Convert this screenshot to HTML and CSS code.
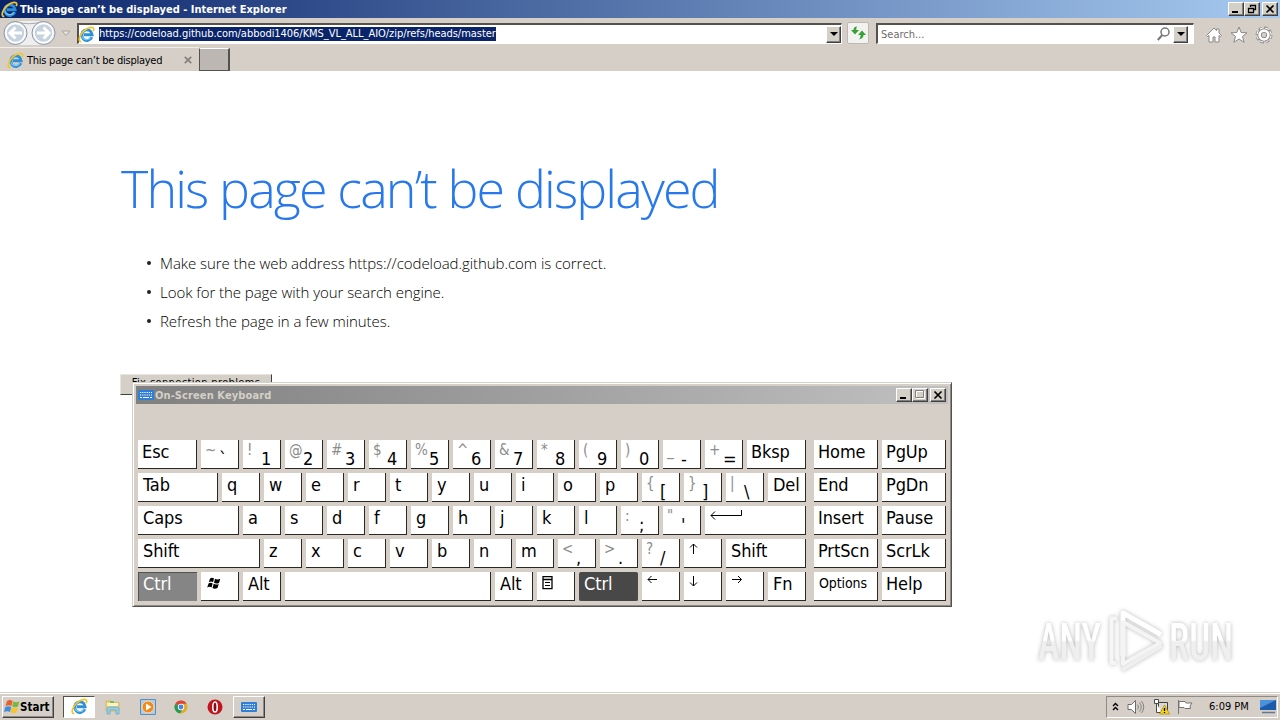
FILE: index.html
```
<!DOCTYPE html>
<html lang="en">
<head>
    <meta charset="UTF-8">
    <title>This page can't be displayed</title>
    <link rel="stylesheet" href="styles.css">
</head>
<body>
    <!-- shared icons -->
    <svg class="defs" width="0" height="0">
        <symbol id="ie" viewBox="0 0 18 18">
            <path d="M14.600 11.800 A5.600 5.600 0 1 1 15 9.300 H6" fill="none" stroke="#2d8fd8" stroke-width="3"/>
            <path d="M13.500 12 A5.300 5.300 0 0 1 4 11" fill="none" stroke="#7accf3" stroke-width="1.200"/>
            <path d="M3.500 16.600 C-1.500 16.500 2.500 6 11 2.200 C15.500 .4 17.800 2 16 5.500" fill="none" stroke="#f3c52c" stroke-width="1.800"/>
        </symbol>
        <symbol id="kbd" viewBox="0 0 16 10">
            <rect width="16" height="10" rx="1" fill="#2f7fd6"/>
            <path d="M2 2.500h12M2 5h12" stroke="#fff" stroke-width="1.200" stroke-dasharray="1.200 1"/>
            <path d="M2 7.500h2M5 7.500h6M12 7.500h2" stroke="#fff" stroke-width="1.200"/>
        </symbol>
    </svg>

    <div class="titlebar">
        <svg class="ic18"><use href="#ie"/></svg>
        <span class="title">This page can’t be displayed - Internet Explorer</span>
        <div class="winbtns">
            <span class="wb"><svg viewBox="0 0 14 12"><path d="M3 9h6" stroke="#000" stroke-width="2"/></svg></span>
            <span class="wb"><svg viewBox="0 0 14 12"><path d="M5.500 4V2.500h5v4H9M5 2.500h6M3.500 5.500h5v4h-5zM3 5.500h6" fill="none" stroke="#000" stroke-width="1.300"/></svg></span>
            <span class="wb close"><svg viewBox="0 0 14 12"><path d="M3.500 2.500l7 7M10.500 2.500l-7 7" stroke="#000" stroke-width="1.700"/></svg></span>
        </div>
    </div>

    <div class="toolbar">
        <svg class="nav" width="72" height="28" viewBox="0 0 72 28">
            <path d="M15 2H43V26H15z" fill="#f0eff0"/>
            <path d="M15 2.500 Q29 7 43 2.500" fill="none" stroke="#aaa9ae"/>
            <circle cx="15.500" cy="14" r="11.500" fill="#e6ebf0" stroke="#8c98a7"/>
            <circle cx="15.500" cy="14" r="9.500" fill="#c6d3de" stroke="#fff" stroke-width="1.500"/>
            <path d="M22 14H10M15.500 8.500L10 14l5.500 5.500" fill="none" stroke="#fff" stroke-width="3"/>
            <circle cx="43.500" cy="14" r="11.500" fill="#e6ebf0" stroke="#8c98a7"/>
            <circle cx="43.500" cy="14" r="9.500" fill="#c6d3de" stroke="#fff" stroke-width="1.500"/>
            <path d="M37 14h12M43.500 8.500L49 14l-5.500 5.500" fill="none" stroke="#fff" stroke-width="3"/>
            <path d="M62 12h8l-4 4.500z" fill="#e5e2de" stroke="#aaa59f"/>
        </svg>
        <div class="field address">
            <svg class="ic18"><use href="#ie"/></svg>
            <span class="url">https://codeload.github.com/abbodi1406/KMS_VL_ALL_AIO/zip/refs/heads/master</span>
            <span class="drop"></span>
        </div>
        <div class="go">
            <svg width="20" height="20" viewBox="0 0 20 20"><path d="M9 3.500Q5.500 3.500 5.500 7H3l4 4.500L11 7H8.300Q8 5 9 3.500zM11 16.500Q15.500 15.500 15.500 12H18l-4-4.500L10 12h2.700Q12.500 15 11 16.500z" fill="#35a137"/></svg>
        </div>
        <div class="field search">
            <span class="hint">Search...</span>
            <svg width="16" height="16" viewBox="0 0 16 16"><circle cx="9" cy="6" r="4" fill="none" stroke="#777" stroke-width="1.500"/><path d="M6.300 9l-4.500 5" stroke="#777" stroke-width="2"/></svg>
            <span class="drop"></span>
        </div>
        <div class="tools">
            <svg width="18" height="18" viewBox="0 0 18 18"><path d="M1.500 9.500L9 2l2.500 2.500V3h2.500v4l2.500 2.500-1 1-1.500-1V16h-4v-5H8v5H4V9.500l-1.500 1z" fill="#fff" stroke="#8b8885"/></svg>
            <svg width="18" height="18" viewBox="0 0 18 18"><path d="M9 1l2.200 5.500 5.800.3-4.500 3.700 1.600 5.800L9 13l-5.100 3.300 1.600-5.800L1 6.800l5.800-.3z" fill="#fff" stroke="#8b8885"/></svg>
            <svg width="18" height="18" viewBox="0 0 18 18"><circle cx="9" cy="9" r="6.800" fill="none" stroke="#8b8885" stroke-width="3.200" stroke-dasharray="3.300 2.040"/><circle cx="9" cy="9" r="6.500" fill="none" stroke="#fff" stroke-width="2.200" stroke-dasharray="2.400 2.705" stroke-dashoffset="-.4"/><circle cx="9" cy="9" r="4.400" fill="none" stroke="#8b8885" stroke-width="4.400"/><circle cx="9" cy="9" r="4.400" fill="none" stroke="#fff" stroke-width="2.600"/></svg>
        </div>
    </div>

    <div class="tabs">
        <div class="tab">
            <svg class="ic18"><use href="#ie"/></svg>
            <span class="tabname">This page can’t be displayed</span>
            <svg class="tabx" width="8" height="8" viewBox="0 0 8 8"><path d="M.8.8l6.400 6.400M7.200.8L.8 7.200" stroke="#85817c" stroke-width="1.800"/></svg>
        </div>
        <div class="newtab"></div>
    </div>

    <div class="page">
        <h1>This page can’t be displayed</h1>
        <ul>
            <li class="l1">Make sure the web address https://codeload.github.com is correct.</li>
            <li class="l2">Look for the page with your search engine.</li>
            <li class="l3">Refresh the page in a few minutes.</li>
        </ul>
        <div class="fix">Fix connection problems</div>
    </div>

    <div class="osk">
        <div class="osk-title">
            <svg class="kbd"><use href="#kbd"/></svg>
            <span class="title">On-Screen Keyboard</span>
            <div class="winbtns">
                <span class="wb"><svg viewBox="0 0 14 12"><path d="M3 9h6" stroke="#000" stroke-width="2"/></svg></span>
                <span class="wb"><svg viewBox="0 0 14 12"><path d="M3.500 2.500h8v7h-8z" fill="none" stroke="#fff"/><path d="M2.500 1.500h8v7h-8z" fill="none" stroke="#85817a"/></svg></span>
                <span class="wb close"><svg viewBox="0 0 14 12"><path d="M3.500 2.500l7 7M10.500 2.500l-7 7" stroke="#000" stroke-width="1.700"/></svg></span>
            </div>
        </div>
        <div class="keys">
            <div class="row">
                <div class="key w59">Esc</div>
                <div class="key two tilde"><i>~</i><b>`</b></div>
                <div class="key two"><i>!</i><b>1</b></div>
                <div class="key two"><i>@</i><b>2</b></div>
                <div class="key two"><i>#</i><b>3</b></div>
                <div class="key two"><i>$</i><b>4</b></div>
                <div class="key two"><i>%</i><b>5</b></div>
                <div class="key two"><i>^</i><b>6</b></div>
                <div class="key two"><i>&amp;</i><b>7</b></div>
                <div class="key two"><i>*</i><b>8</b></div>
                <div class="key two"><i>(</i><b>9</b></div>
                <div class="key two"><i>)</i><b>0</b></div>
                <div class="key two"><i>_</i><b>-</b></div>
                <div class="key two"><i>+</i><b>=</b></div>
                <div class="key w59">Bksp</div>
                <div class="key side">Home</div>
                <div class="key w64">PgUp</div>
            </div>
            <div class="row">
                <div class="key w80">Tab</div>
                <div class="key">q</div>
                <div class="key">w</div>
                <div class="key">e</div>
                <div class="key">r</div>
                <div class="key">t</div>
                <div class="key">y</div>
                <div class="key">u</div>
                <div class="key">i</div>
                <div class="key">o</div>
                <div class="key">p</div>
                <div class="key two"><i>{</i><b>[</b></div>
                <div class="key two"><i>}</i><b>]</b></div>
                <div class="key two"><i>|</i><b>\</b></div>
                <div class="key">Del</div>
                <div class="key side">End</div>
                <div class="key w64">PgDn</div>
            </div>
            <div class="row">
                <div class="key w101">Caps</div>
                <div class="key">a</div>
                <div class="key">s</div>
                <div class="key">d</div>
                <div class="key">f</div>
                <div class="key">g</div>
                <div class="key">h</div>
                <div class="key">j</div>
                <div class="key">k</div>
                <div class="key">l</div>
                <div class="key two"><i>:</i><b>;</b></div>
                <div class="key two"><i>"</i><b>'</b></div>
                <div class="key w101"><svg width="34" height="12" viewBox="0 0 34 12"><path d="M31.500 0v5.500H1M5 1.500l-4 4 4 4" fill="none" stroke="#000"/></svg></div>
                <div class="key side">Insert</div>
                <div class="key w64">Pause</div>
            </div>
            <div class="row">
                <div class="key w122">Shift</div>
                <div class="key">z</div>
                <div class="key">x</div>
                <div class="key">c</div>
                <div class="key">v</div>
                <div class="key">b</div>
                <div class="key">n</div>
                <div class="key">m</div>
                <div class="key two"><i>&lt;</i><b>,</b></div>
                <div class="key two"><i>&gt;</i><b>.</b></div>
                <div class="key two"><i>?</i><b>/</b></div>
                <div class="key"><svg class="up" width="12" height="13" viewBox="0 0 12 13"><path d="M4.500 11V1M1 4.500L4.500 1 8 4.500" fill="none" stroke="#000"/></svg></div>
                <div class="key w80">Shift</div>
                <div class="key side">PrtScn</div>
                <div class="key w64">ScrLk</div>
            </div>
            <div class="row">
                <div class="key w59 latched">Ctrl</div>
                <div class="key win"><svg width="16" height="15" viewBox="0 0 16 15"><path d="M4 2.500q2-1.500 4 0L7 6.200Q5 4.700 2.800 6.200zM9 2.800q2.500 1.500 5.300 0L13 7Q10 8.300 8 6.800zM2.500 7.500q2-1.500 4.200 0l-1.200 4Q3.500 10 1.200 11.500zM7.700 7.800q2 1.500 5 .2L11.500 12q-3 1.300-5 0z"/></svg></div>
                <div class="key">Alt</div>
                <div class="key space"></div>
                <div class="key">Alt</div>
                <div class="key"><svg width="12" height="15" viewBox="0 0 12 15"><path d="M1 .7h9v12H1zM.5 3.500h10" fill="none" stroke="#000" stroke-width="1.300"/><path d="M3 6.500h5M3 9.500h5" stroke="#000"/></svg></div>
                <div class="key w59 down">Ctrl</div>
                <div class="key"><svg width="12" height="12" viewBox="0 0 12 12"><path d="M10 3.500H1M4.500 0L1 3.500 4.500 7" fill="none" stroke="#000"/></svg></div>
                <div class="key"><svg width="12" height="13" viewBox="0 0 12 13"><path d="M4.500 0v10M1 6.500L4.500 10 8 6.500" fill="none" stroke="#000"/></svg></div>
                <div class="key"><svg width="12" height="12" viewBox="0 0 12 12"><path d="M1 3.500h9.500M7 0l3.500 3.500L7 7" fill="none" stroke="#000"/></svg></div>
                <div class="key">Fn</div>
                <div class="key side options">Options</div>
                <div class="key w64">Help</div>
            </div>
        </div>
    </div>

    <svg class="watermark" width="250" height="80" viewBox="0 0 250 80">
        <defs>
            <linearGradient id="fade" x1="0" y1="0" x2="0" y2="1">
                <stop offset=".46" stop-color="#fff"/>
                <stop offset=".49" stop-color="#efefef"/>
            </linearGradient>
        </defs>
        <text x="8" y="60" textLength="63" lengthAdjust="spacingAndGlyphs">ANY</text>
        <text x="139" y="60" textLength="64" lengthAdjust="spacingAndGlyphs">RUN</text>
        <path d="M87 18.500h-5.500V63H86" fill="none" stroke="#f6f6f6" stroke-width="4" stroke-linejoin="round"/>
        <path d="M93 56V13L131 34.500" fill="none" stroke="#fff" stroke-width="5" stroke-linejoin="round"/>
        <path d="M93 22L130 43 93 64z" fill="none" stroke="#f4f4f4" stroke-width="4" stroke-linejoin="round"/>
        <path d="M92 69.500L132 46" stroke="#efefef" stroke-width="4" fill="none"/>
    </svg>

    <div class="taskbar">
        <div class="start">
            <svg width="16" height="16" viewBox="0 0 16 16"><path d="M3 2q3-2 5.500 0L7.500 7Q5 5.500 1.500 7z" fill="#e8602a"/><path d="M9.300 2.500q3 1.500 6 0L14 7.500q-3 1.500-5.700 0z" fill="#7db83a"/><path d="M1.300 8q3-1.500 6 0L6 13Q3 11.500 0 13z" fill="#3f8fdc"/><path d="M8 8.500q3 1.500 6 0L12.500 13.500q-3 1.500-6 0z" fill="#f7c42c"/></svg>
            <span>Start</span>
        </div>
        <div class="task active"><svg class="ic18"><use href="#ie"/></svg></div>
        <div class="quick">
            <svg width="16" height="16" viewBox="0 0 16 16"><path d="M1 2h5l1 1.500h7V12H1z" fill="#f0cf69" stroke="#cfae4e" stroke-width=".6"/><path d="M2 4h11v3H2z" fill="#fbf3c4"/><path d="M5 3h4" stroke="#57b567" stroke-width="1.500"/><path d="M2 15V9.500Q2 8 4 8h8q2 0 2 1.500V15h-3v-4H5v4z" fill="#8fcdec" stroke="#5b9fc4" stroke-width=".6"/></svg>
            <svg width="16" height="16" viewBox="0 0 16 16"><path d="M.5.500h15v15H.5z" fill="#a9cdec" stroke="#5b8ebf"/><circle cx="8" cy="8" r="6" fill="#f08a1d" stroke="#fbdcae"/><path d="M6 4.500v7L11.500 8z" fill="#fff"/></svg>
            <svg width="14" height="14" viewBox="0 0 14 14"><circle cx="7" cy="7" r="6.500" fill="#e1ad25"/><path d="M7 7L1.400 3.700A6.500 6.500 0 0 1 12.700 3.800H7z" fill="#dc4437"/><path d="M7 7L1.400 3.700A6.500 6.500 0 0 0 6 13.500L8.500 9z" fill="#249a57"/><circle cx="7" cy="7" r="3.200" fill="#fff"/><circle cx="7" cy="7" r="2.400" fill="#4a83e8"/></svg>
            <svg width="16" height="16" viewBox="0 0 16 16"><circle cx="8" cy="8" r="7.500" fill="#c2141c"/><ellipse cx="8" cy="8" rx="2.200" ry="5" fill="#8b0b12" stroke="#fff" stroke-width="1.600"/></svg>
        </div>
        <div class="task osk-task"><svg class="kbd"><use href="#kbd"/></svg></div>
        <div class="tray">
            <svg width="7" height="10" viewBox="0 0 7 10"><path d="M1 4l2.500-2.500L6 4M1 8l2.500-2.500L6 8" fill="none" stroke="#000" stroke-width="1.400"/></svg>
            <svg width="18" height="16" viewBox="0 0 18 16"><path d="M1 5.500h3.500L8.500 1.500v13l-4-4H1z" fill="#fff" stroke="#6e6c69"/><path d="M10.500 5.500q2 2.500 0 5M12.500 3.500q3.500 4.500 0 9M14.500 2q4.500 6 0 12" fill="none" stroke="#85827d"/></svg>
            <svg width="17" height="17" viewBox="0 0 17 17"><path d="M5.500 4.500h9v8h-9z" fill="#d8d8d6" stroke="#3f3f3d"/><path d="M1.500 1.500h4v4h-4zM3.500 5.500V14.500H9" fill="#fff" stroke="#4a4a48"/><path d="M11.500 7l5 9h-10z" fill="#f7d51e" stroke="#a9860d" stroke-width=".7"/><path d="M11.500 10v3M11.500 14v1" stroke="#000" stroke-width="1.300"/></svg>
            <svg class="flag" width="16" height="16" viewBox="0 0 16 16"><path d="M1.500 1v14M2 2.500h6l1 1.500h6l-2 3 .5 2.500H8L7 8.500H2z" fill="#fff" stroke="#777470"/></svg>
            <span class="clock">6:09 PM</span>
            <svg width="17" height="15" viewBox="0 0 17 15"><path d="M0 1h16v10H0z" fill="#1d5cab"/><path d="M0 1h16L0 9z" fill="#4c92db"/><path d="M2 13.500h13" stroke="#5f7892" stroke-width="1.500"/></svg>
        </div>
    </div>
</body>
</html>
```
FILE: styles.css
```
* {
    box-sizing: border-box;
}

body {
    margin: 0;
    width: 1280px;
    height: 720px;
    overflow: hidden;
    position: relative;
    display: flex;
    flex-direction: column;
    background: #fff;
    color: #000;
    font-family: "DejaVu Sans Condensed", "DejaVu Sans", sans-serif;
    font-stretch: condensed;
    font-size: 11px;
    white-space: nowrap;
}

svg {
    display: block;
    flex: none;
}

.defs {
    position: absolute;
}

.ic18 {
    width: 17px;
    height: 17px;
}

.kbd {
    width: 16px;
    height: 10px;
}

/* title bars */
.titlebar {
    height: 18px;
    flex: none;
    display: flex;
    align-items: center;
    padding: 0 2px 0 1px;
    background: linear-gradient(90deg, #0a246a, #a6caf0);
    color: #fff;
}

.title {
    flex: 1;
    font-weight: bold;
    margin-left: 2px;
}

.winbtns {
    display: flex;
}

.wb {
    width: 16px;
    height: 14px;
    background: #d4d0c8;
    border: 1px solid;
    border-color: #fff #404040 #404040 #fff;
    box-shadow: inset -1px -1px #808080;
}

.wb svg {
    width: 14px;
    height: 12px;
}

.close {
    margin-left: 2px;
}

/* toolbar */
.toolbar {
    height: 29px;
    flex: none;
    display: flex;
    align-items: flex-start;
    padding-top: 5px;
    background: #d5cfc8;
}

.nav {
    margin-top: -4px;
}

.field {
    height: 21px;
    display: flex;
    align-items: center;
    background: #fff;
    border: 2px solid;
    border-width: 2px 1px 1px 2px;
    border-color: #55514d #fff #fff #55514d;
}

.address {
    width: 765px;
    margin-left: 5px;
}

.address .ic18 {
    margin-left: -1px;
}

.url {
    margin-left: 4px;
    height: 14px;
    line-height: 14px;
    background: #0a246a;
    color: #fff;
    width: 397px;
    letter-spacing: -0.04px;
}

.drop {
    width: 15px;
    height: 17px;
    margin-left: auto;
    display: flex;
    align-items: center;
    justify-content: center;
    background: #d4d0c8;
    border: 1px solid;
    border-color: #fff #404040 #404040 #fff;
    box-shadow: inset -1px -1px #808080;
}

.drop::before {
    content: "";
    border: 4px solid transparent;
    border-top-color: #000;
    border-bottom: 0;
}

.go {
    width: 22px;
    height: 22px;
    margin: -1px 7px 0 5px;
    background: #f2f2f0;
    border: 1px solid #bdb8b2;
    border-radius: 2px;
}

.search {
    width: 318px;
    padding-right: 5px;
}

.hint {
    flex: 1;
    margin-left: 3px;
    color: #6d6d6d;
}

.search .drop {
    margin-left: 1px;
}

.tools {
    display: flex;
    gap: 7px;
    margin: 3px 0 0 11px;
}

/* tabs */
.tabs {
    height: 24px;
    flex: none;
    display: flex;
    background: #d5cfc8;
}

.tab {
    width: 199px;
    display: flex;
    align-items: center;
    padding: 2px 0 0 7px;
    border-top: 1px solid #f0eeea;
}

.tabname {
    margin-left: 3px;
    width: 157px;
    letter-spacing: -0.25px;
}

.tabx {
    margin-top: -1px;
}

.newtab {
    width: 31px;
    height: 23px;
    margin-top: 1px;
    background: #bcb7b2;
    border: 1px solid #55514d;
    border-top-color: #fff;
    border-right-width: 2px;
}

/* error page */
.page {
    flex: 1;
    padding: 85px 0 0 121px;
    background: #fff;
    font-family: "Open Sans", sans-serif;
    font-stretch: normal;
    font-weight: 300;
}

h1 {
    margin: 0;
    height: 70px;
    line-height: 63px;
    font-size: 52px;
    font-weight: 300;
    color: #2778ec;
    letter-spacing: -1.87px;
}

ul {
    margin: 22px 0 0;
    padding: 0;
    list-style: none;
}

li {
    display: flex;
    align-items: center;
    height: 29px;
    font-size: 15px;
    letter-spacing: -0.05px;
}

li::before {
    content: "";
    width: 4px;
    height: 4px;
    border-radius: 50%;
    background: #222;
    margin: 0 9px 0 26px;
}

.fix {
    width: 152px;
    height: 21px;
    margin: 39px 0 0 -1px;
    padding-top: 1px;
    text-align: center;
    background: #d4d0c8;
    border: 1px solid;
    border-color: #e8e5e0 #404040 #404040 #e8e5e0;
    font: 11px "DejaVu Sans Condensed", sans-serif;
    letter-spacing: 0.35px;
}

/* on-screen keyboard */
.osk {
    position: absolute;
    left: 132px;
    top: 382px;
    width: 820px;
    height: 225px;
    padding: 2px;
    background: #d5cfc8;
    border: 1px solid;
    border-color: #d4d0c8 #55514d #55514d #d4d0c8;
    box-shadow: inset 1px 1px #fff, inset -1px -1px #8e8a84;
}

.osk-title {
    height: 18px;
    margin: 1px;
    display: flex;
    align-items: center;
    padding: 0 2px;
    background: linear-gradient(90deg, #808080, #c0c0c0);
    color: #d4d0c8;
}

.osk-title .title {
    margin-left: 1px;
    letter-spacing: 0.1px;
}

.keys {
    display: flex;
    flex-direction: column;
    gap: 4px;
    padding: 35px 0 0 3px;
}

.row {
    display: flex;
    gap: 4px;
}

.key {
    width: 38px;
    height: 29px;
    flex: none;
    overflow: hidden;
    padding-left: 5px;
    background: #fff;
    border: 1px solid #2c2925;
    border-width: 0 1px 1px 0;
    font-size: 18px;
    line-height: 24px;
    letter-spacing: -0.1px;
}

.key svg {
    margin: 4px 0 0;
}

.w59,
.w64,
.side {
    padding-left: 4px;
}

.w59 {
    width: 59px;
}

.w64 {
    width: 64px;
}

.w80 {
    width: 80px;
}

.w101 {
    width: 101px;
}

.w122 {
    width: 122px;
}

.space {
    width: 206px;
}

.side {
    width: 64px;
    margin-left: 4px;
}

.two {
    display: flex;
    padding-left: 4px;
}

.two i {
    width: 14px;
    flex: none;
    font-style: normal;
    font-size: 15px;
    line-height: 20px;
    color: #8c8c8c;
}

.two b {
    font-weight: normal;
    margin-top: 7px;
}

.latched {
    background: #858585;
    border: 1px solid #55514d;
    border-width: 1px 0 0 1px;
    color: #fff;
    line-height: 22px;
}

.down {
    background: #484848;
    border-color: #484848;
    border-radius: 2px;
    color: #fff;
    padding-left: 5px;
}

.options {
    padding-left: 5px;
    font-size: 14px;
    line-height: 23px;
}

/* watermark */
.watermark {
    position: absolute;
    left: 1030px;
    top: 600px;
    filter: drop-shadow(0 0 2px rgba(0, 0, 0, 0.28));
}

.watermark text {
    font-family: Roboto, sans-serif;
    font-size: 52px;
    font-weight: 500;
    fill: url(#fade);
}

/* taskbar */
.taskbar {
    height: 28px;
    flex: none;
    display: flex;
    align-items: center;
    padding: 2px 2px 2px;
    background: #d5cfc8;
    border-top: 1px solid #d5cfc8;
    box-shadow: inset 0 1px #fff;
}

.start,
.task {
    height: 22px;
    display: flex;
    align-items: center;
    border: 1px solid;
    border-color: #fff #404040 #404040 #fff;
    box-shadow: inset -1px -1px #8e8a84;
}

.start {
    width: 52px;
    padding-left: 1px;
    font-size: 11.5px;
    font-weight: bold;
}

.task {
    width: 32px;
    justify-content: center;
}

.active {
    margin-left: 9px;
    background: #fff;
    border-color: #55514d #fff #fff #55514d;
    box-shadow: none;
}

.quick {
    display: flex;
    align-items: center;
    gap: 18.6px;
    margin: 0 10px 0 10px;
}

.tray {
    width: 172px;
    height: 22px;
    margin-left: auto;
    display: flex;
    align-items: center;
    padding-left: 5px;
    border: 1px solid;
    border-color: #8e8a84 #fff #fff #8e8a84;
    gap: 8px;
}

.tray .flag {
    margin-left: -1px;
}

.clock {
    width: 43px;
    margin-left: 8px;
}
```
